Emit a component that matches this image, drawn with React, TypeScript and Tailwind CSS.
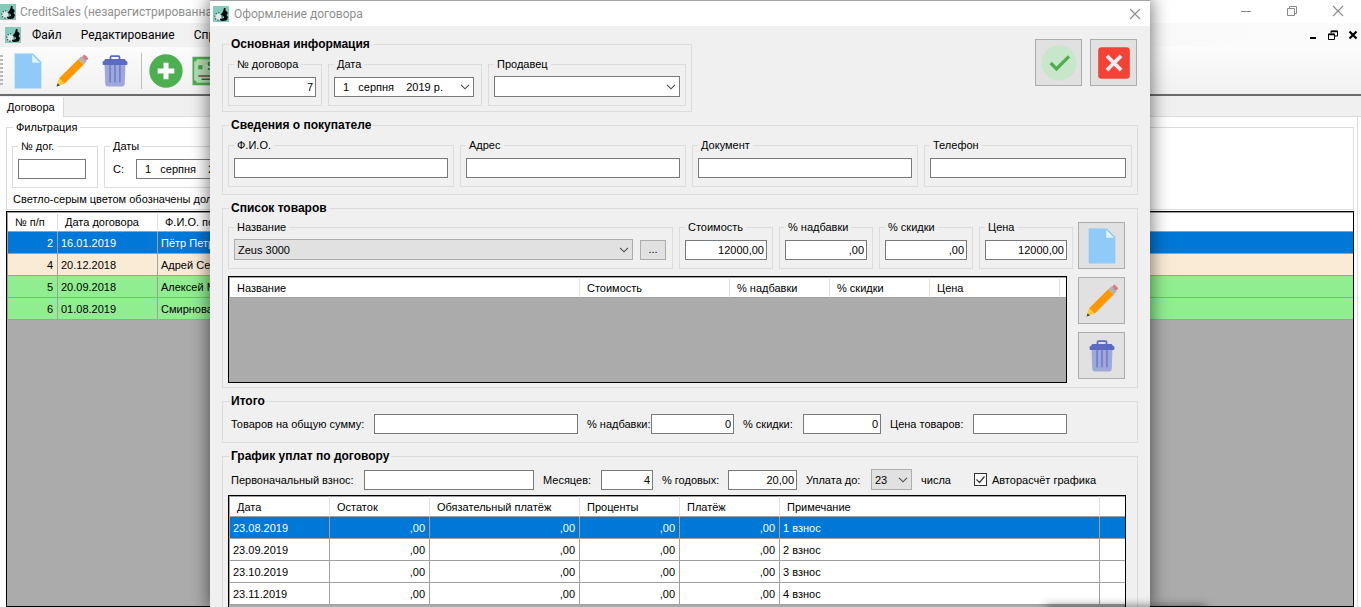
import React, { useId } from "react";

type IconProps = { className?: string };

function AppIcon() {
  return (
    <svg viewBox="0 0 16 16" className="size-4 shrink-0" aria-hidden="true">
      <rect width="16" height="16" fill="#86cabd" />
      <circle cx="5.500" cy="10.500" r="3.600" fill="#d9ebe6" stroke="#2c4440" strokeWidth="1.200" strokeDasharray="1.200 1.500" />
      <path d="M11 2h1.500v2.500L14.500 6v2l-1 1 1.500 2-1 3-2 1-1.500-1 .5-3-1-1.500-1.500.500V8l1.500-2.500z" fill="#050b0a" />
      <path d="M7.500 8.500l3-1v2zM7 13l4-1v3H8z" fill="#0b1716" />
    </svg>
  );
}

function FileIcon({ className }: IconProps) {
  return (
    <svg viewBox="0 0 48 48" className={className} aria-hidden="true">
      <path d="M40 45H8V3h22l10 10z" fill="#90caf9" />
      <path d="M38.500 14H29V4.500z" fill="#e1f5fe" />
    </svg>
  );
}

function PencilIcon({ className }: IconProps) {
  return (
    <svg viewBox="0 0 48 48" className={className} aria-hidden="true">
      <path d="M36.200 7.200l4.200 4.200L44.800 8.600c.8-.8.8-1.700 0-2.500l-3.100-3.100c-.8-.8-1.700-.8-2.500 0z" fill="#d97b83" />
      <path d="M32.400 8.200l4-4 7.200 7.200-4 4z" fill="#b3b3b3" />
      <path d="M6.800 33.800L32.400 8.200l7.200 7.200L14 41z" fill="#ff9800" />
      <path d="M6.800 33.800L3.500 44.500 14 41z" fill="#ffc930" />
      <path d="M4.800 40.200L3.400 44.600l4.500-1.400z" fill="#37474f" />
    </svg>
  );
}

function TrashIcon({ className }: IconProps) {
  return (
    <svg viewBox="0 0 48 48" className={className} aria-hidden="true">
      <path d="M18 9V5.500c0-.8.5-1.300 1.300-1.300h9.400c.8 0 1.300.5 1.300 1.300V9" fill="none" stroke="#5c6bc0" strokeWidth="2.400" />
      <path d="M10 14h28l-1 27c-.1 2-1.500 3.500-3.500 3.500h-19c-2 0-3.400-1.500-3.500-3.500z" fill="#9fa8da" />
      <path d="M17.500 17v21M24 17v21M30.500 17v21" stroke="#7381cc" strokeWidth="2.400" strokeLinecap="round" />
      <path d="M11 8h26l2 3h1.500v4c0 .6-.4 1-1 1h-31c-.6 0-1-.4-1-1v-4H9z" fill="#5c6bc0" />
    </svg>
  );
}

function PlusIcon({ className }: IconProps) {
  return (
    <svg viewBox="0 0 48 48" className={className} aria-hidden="true">
      <circle cx="24" cy="24" r="20" fill="#4caf50" />
      <path d="M21 14h6v20h-6zM14 21h20v6H14z" fill="#fff" />
    </svg>
  );
}

function MoneyIcon({ className }: IconProps) {
  return (
    <svg viewBox="0 0 48 48" className={className} aria-hidden="true">
      <path d="M3 7h42v34H3z" fill="#4caf50" />
      <path d="M8 10h32c0 2 1 3 3 3v22c-2 0-3 1-3 3H8c0-2-1-3-3-3V13c2 0 3-1 3-3z" fill="#b5deb7" />
      <path d="M10 17h5v5h-5z" fill="#43a047" />
      <circle cx="26" cy="19" r="7" fill="#c8e6c9" />
      <path d="M29 14.500c-1-1.500-7-1.500-7 1s7 2 7 4.500-6 3-7.500 1M25.500 11v14" fill="none" stroke="#2e7d32" strokeWidth="1.800" />
      <path d="M10 30h14M14 34h12" stroke="#6d4c41" strokeWidth="1.800" />
    </svg>
  );
}

function OkIcon({ className }: IconProps) {
  return (
    <svg viewBox="0 0 48 48" className={className} aria-hidden="true">
      <circle cx="24" cy="24" r="21" fill="#c8e6c9" />
      <path d="M34.600 14.600L21 28.200l-5.600-5.600-2.800 2.800 8.400 8.400 16.400-16.400z" fill="#4caf50" />
    </svg>
  );
}

function CancelIcon({ className }: IconProps) {
  return (
    <svg viewBox="0 0 48 48" className={className} aria-hidden="true">
      <rect x="5" y="5" width="38" height="38" rx="4" fill="#f44336" />
      <path d="M15.500 15.500l17 17M32.500 15.500l-17 17" stroke="#ffebee" strokeWidth="4.500" />
    </svg>
  );
}

function Chevron() {
  return (
    <svg viewBox="0 0 10 6" className="pointer-events-none col-start-1 row-start-1 mr-1 h-1.5 w-2.5 self-center justify-self-end" aria-hidden="true">
      <path d="M1 .8l4 4 4-4" fill="none" stroke="#4a4a4a" strokeWidth="1.100" />
    </svg>
  );
}

function CloseGlyph() {
  return (
    <svg viewBox="0 0 12 12" className="size-3" aria-hidden="true">
      <path d="M1 1l10 10M11 1L1 11" stroke="#8a8a8a" strokeWidth="1.100" />
    </svg>
  );
}

function Section({ title, className, children }: { title: string; className: string; children: React.ReactNode }) {
  return (
    <fieldset className={"min-w-0 border border-[#dcdcdc] px-[5px] " + className}>
      <legend className="ml-px px-0.5 text-[12px] leading-[13px] font-bold">{title}</legend>
      {children}
    </fieldset>
  );
}

function Box({ title, className = "", children }: { title: string; className?: string; children: React.ReactNode }) {
  return (
    <fieldset className={"min-w-0 border border-[#dcdcdc] px-[5px] pt-1.5 pb-2 " + className}>
      <legend className="px-[3px] leading-[13px] whitespace-nowrap">{title}</legend>
      {children}
    </fieldset>
  );
}

function TextBox({ value = "", label, id, className = "w-full" }: { value?: string; label?: string; id?: string; className?: string }) {
  return (
    <input
      id={id}
      type="text"
      aria-label={label}
      defaultValue={value}
      className={"block h-5 min-w-0 border border-[#7a7a7a] bg-white px-0.5 text-right outline-none " + className}
    />
  );
}

function Field({ label, value, className, width }: { label: string; value?: string; className: string; width: string }) {
  const id = useId();
  return (
    <div className={"flex items-center " + className}>
      <label htmlFor={id} className="whitespace-nowrap">{label}</label>
      <TextBox id={id} value={value} className={width} />
    </div>
  );
}

function DateBox({ label, className }: { label: string; className: string }) {
  return (
    <div className={"grid " + className}>
      <input
        type="text"
        aria-label={label}
        defaultValue={"1\u00a0\u00a0\u00a0серпня\u00a0\u00a0\u00a0\u00a02019 р."}
        className="col-start-1 row-start-1 block h-5 w-full min-w-0 border border-[#7a7a7a] bg-white pl-2 outline-none"
      />
      <Chevron />
    </div>
  );
}

function Combo({ options, label, id, className, look }: { options: string[]; label?: string; id?: string; className: string; look: string }) {
  return (
    <div className={"grid " + className}>
      <select
        id={id}
        aria-label={label}
        className={"col-start-1 row-start-1 block h-[21px] w-full min-w-0 appearance-none border pl-[3px] outline-none " + look}
      >
        {options.map((o) => (
          <option key={o}>{o}</option>
        ))}
      </select>
      <Chevron />
    </div>
  );
}

type Column = { title: string; width: string; right?: boolean };
type GridProps = { columns: Column[]; rows: string[][]; rowLooks: string[]; className: string; headHeight?: string };

function Grid({ columns, rows, rowLooks, className, headHeight = "h-[21px]" }: GridProps) {
  return (
    <div className={"border border-black bg-[#ababab] " + className}>
      <table className="w-full table-fixed border-separate border-spacing-0 border-l border-[#a0a0a0]">
        <thead>
          <tr className={"bg-white " + headHeight}>
            {columns.map((c, i) => (
              <th
                key={i}
                scope="col"
                className={"border-t border-r border-b border-t-[#a0a0a0] border-r-[#e2e2e2] border-b-[#a0a0a0] p-0 pl-[7px] text-left font-normal whitespace-nowrap last:border-r-0 empty:pl-0 " + c.width}
              >
                {c.title}
              </th>
            ))}
          </tr>
        </thead>
        <tbody>
          {rows.map((row, r) => (
            <tr key={r} className={"h-[22px] " + rowLooks[r]}>
              {columns.map((c, i) => (
                <td
                  key={i}
                  className={"border-r border-b border-[#a0a0a0] p-0 pr-1 pl-[3px] whitespace-nowrap last:border-r-0 " + (c.right ? "text-right" : "text-left")}
                >
                  {row[i]}
                </td>
              ))}
            </tr>
          ))}
        </tbody>
      </table>
    </div>
  );
}

const contractColumns: Column[] = [
  { title: "№ п/п", width: "w-[50px]", right: true },
  { title: "Дата договора", width: "w-[100px]" },
  { title: "Ф.И.О. пок.", width: "" },
];
const contracts = [
  ["2", "16.01.2019", "Пётр Петров"],
  ["4", "20.12.2018", "Адрей Сем."],
  ["5", "20.09.2018", "Алексей М."],
  ["6", "01.08.2019", "Смирнова"],
];
const contractLooks = ["bg-[#0078d7] text-white", "bg-[#faebd7]", "bg-[#90ee90]", "bg-[#90ee90]"];

const goodsColumns: Column[] = [
  { title: "Название", width: "" },
  { title: "Стоимость", width: "w-[150px]" },
  { title: "% надбавки", width: "w-[100px]" },
  { title: "% скидки", width: "w-[100px]" },
  { title: "Цена", width: "w-[130px]" },
  { title: "", width: "w-[6px]" },
];

const paymentColumns: Column[] = [
  { title: "Дата", width: "w-[100px]" },
  { title: "Остаток", width: "w-[100px]", right: true },
  { title: "Обязательный платёж", width: "w-[150px]", right: true },
  { title: "Проценты", width: "w-[100px]", right: true },
  { title: "Платёж", width: "w-[100px]", right: true },
  { title: "Примечание", width: "" },
  { title: "", width: "w-[25px]" },
];
const payments = [
  ["23.08.2019", ",00", ",00", ",00", ",00", "1 взнос", ""],
  ["23.09.2019", ",00", ",00", ",00", ",00", "2 взнос", ""],
  ["23.10.2019", ",00", ",00", ",00", ",00", "3 взнос", ""],
  ["23.11.2019", ",00", ",00", ",00", ",00", "4 взнос", ""],
];
const paymentLooks = ["bg-[#0078d7] text-white", "bg-white", "bg-white", "bg-white"];

const bigButton = "grid size-[47px] shrink-0 place-items-center border border-[#adadad] bg-[#e1e1e1]";

function MainWindow() {
  return (
    <div className="flex h-full flex-col bg-white">
      <header className="flex h-[23px] shrink-0 items-center justify-between bg-white pr-[17px] font-[Roboto,'Open_Sans',sans-serif] text-[12px] text-[#8f8f8f]">
        <div className="flex items-center gap-1 whitespace-nowrap">
          <AppIcon />
          <span>CreditSales (незарегистрированная</span>
        </div>
        <div className="flex items-center gap-[34px] pb-0.5">
          <button type="button" aria-label="Свернуть">
            <svg viewBox="0 0 12 12" className="size-3"><path d="M1 6.500h10" stroke="#8a8a8a" /></svg>
          </button>
          <button type="button" aria-label="Восстановить">
            <svg viewBox="0 0 12 12" className="size-3"><path d="M1.500 3.500h7v7h-7zM3.500 3.500v-2h7v7h-2" fill="none" stroke="#8a8a8a" /></svg>
          </button>
          <button type="button" aria-label="Закрыть"><CloseGlyph /></button>
        </div>
      </header>

      <nav className="flex h-6 shrink-0 items-center justify-between bg-linear-to-r from-[#f0f0f0] to-[#fbfbfb] pr-[3px] pl-[5px] font-[Roboto,'Open_Sans',sans-serif] text-[12px]">
        <div className="flex items-center">
          <AppIcon />
          <button type="button" className="ml-[11px]">Файл</button>
          <button type="button" className="ml-[19px]">Редактирование</button>
          <button type="button" className="ml-[19px]">Справка</button>
        </div>
        <div className="flex items-center gap-2.5">
          <button type="button" aria-label="Свернуть документ">
            <svg viewBox="0 0 10 10" className="size-2.5"><path d="M2 8h6" stroke="#000" strokeWidth="2" /></svg>
          </button>
          <button type="button" aria-label="Восстановить документ">
            <svg viewBox="0 0 10 10" className="size-2.5"><path d="M.5 4h6v5.500h-6zM3 3.500V1h6.500v5H7" fill="none" stroke="#000" /><path d="M.5 4.500h6M3 1.500h6.500" stroke="#000" strokeWidth="1.500" /></svg>
          </button>
          <button type="button" aria-label="Закрыть документ">
            <svg viewBox="0 0 10 10" className="size-2.5"><path d="M1.500 1.500l7 7M8.500 1.500l-7 7" stroke="#000" strokeWidth="2.200" /></svg>
          </button>
        </div>
      </nav>

      <div className="flex h-[49px] shrink-0 items-center border-b-2 border-[#6b6b6b] bg-linear-to-b from-[#fcfcfc] to-[#f1f1f1]">
        <span className="h-8 w-[3px] bg-[repeating-linear-gradient(to_bottom,#b8b8b8_0_2px,transparent_2px_4px)]" />
        <button type="button" aria-label="Новый" className="ml-[5px]"><FileIcon className="size-10" /></button>
        <button type="button" aria-label="Изменить" className="ml-1.5"><PencilIcon className="size-9" /></button>
        <button type="button" aria-label="Удалить" className="ml-[7px]"><TrashIcon className="size-9" /></button>
        <span className="ml-2 h-9 w-px bg-[#bdbdbd]" />
        <button type="button" aria-label="Добавить" className="ml-1"><PlusIcon className="size-10" /></button>
        <button type="button" aria-label="Оплата" className="ml-1"><MoneyIcon className="size-10" /></button>
      </div>

      <div className="flex h-[21px] shrink-0 items-end bg-[#f0f0f0]">
        <button type="button" className="h-5 border-r border-[#d9d9d9] bg-white pr-2 pl-[7px]">Договора</button>
        <span className="h-px flex-1 bg-[#dcdcdc]" />
      </div>

      <main className="mr-[3px] flex min-h-0 flex-1 flex-col border-r border-[#dcdcdc] pt-1 pr-[3px] pl-1.5">
        <fieldset className="border border-[#dcdcdc] px-[5px] pb-[3px]">
          <legend className="ml-px px-[3px] leading-[13px]">Фильтрация</legend>
          <div className="flex gap-1.5 pt-1.5">
            <Box title="№ дог." className="w-[86px]"><TextBox label="№ дог." className="w-[68px]" /></Box>
            <Box title="Даты" className="w-[290px]">
              <div className="flex items-center">
                <span className="w-[26px] pl-[3px]">С:</span>
                <DateBox label="С" className="w-[139px]" />
              </div>
            </Box>
          </div>
          <p className="pt-1 pl-px leading-[14px]">Светло-серым цветом обозначены долги</p>
        </fieldset>
        <Grid columns={contractColumns} rows={contracts} rowLooks={contractLooks} headHeight="h-5" className="mt-px flex-1" />
      </main>
    </div>
  );
}

function ContractDialog() {
  const dayId = useId();
  return (
    <section
      role="dialog"
      aria-label="Оформление договора"
      className="absolute top-0 right-[211px] bottom-0 left-[210px] border-t border-[#a5a5a5] bg-[#f0f0f0] shadow-[0_0_16px_2px_rgba(0,0,0,0.5)]"
    >
      <div className="flex h-full flex-col overflow-hidden">
        <header className="flex h-[25px] shrink-0 items-center justify-between bg-white pr-[9px] pl-[3px] font-[Roboto,'Open_Sans',sans-serif] text-[12px] text-[#8f8f8f]">
          <div className="flex items-center gap-[5px]">
            <AppIcon />
            <h1>Оформление договора</h1>
          </div>
          <button type="button" aria-label="Закрыть"><CloseGlyph /></button>
        </header>

        <div className="flex flex-col gap-[7px] px-3 pt-3">
          <div className="flex items-start justify-between">
            <Section title="Основная информация" className="pt-[7px] pb-[5px]">
              <div className="flex gap-1.5">
                <Box title="№ договора" className="w-[94px]"><TextBox label="№ договора" value="7" /></Box>
                <Box title="Дата" className="w-[154px]"><DateBox label="Дата" className="mr-0.5" /></Box>
                <Box title="Продавец" className="w-[198px]">
                  <Combo options={[""]} label="Продавец" className="-my-px" look="border-[#7a7a7a] bg-white" />
                </Box>
              </div>
            </Section>
            <div className="flex gap-2 pt-px pr-px">
              <button type="button" aria-label="Принять" className={bigButton}><OkIcon className="size-10" /></button>
              <button type="button" aria-label="Отменить" className={bigButton}><CancelIcon className="size-10" /></button>
            </div>
          </div>

          <Section title="Сведения о покупателе" className="pt-[7px] pb-[7px]">
            <div className="flex gap-1.5">
              <Box title="Ф.И.О." className="flex-1"><TextBox label="Ф.И.О." /></Box>
              <Box title="Адрес" className="flex-1"><TextBox label="Адрес" /></Box>
              <Box title="Документ" className="flex-1"><TextBox label="Документ" /></Box>
              <Box title="Телефон" className="w-[208px]"><TextBox label="Телефон" /></Box>
            </div>
          </Section>

          <Section title="Список товаров" className="pt-1.5 pb-1">
            <div className="flex gap-[5px] pr-[7px]">
              <div className="flex min-w-0 flex-1 flex-col gap-[7px]">
                <div className="flex gap-1.5">
                  <Box title="Название" className="flex-1">
                    <div className="-my-px flex items-center gap-[7px] pr-px">
                      <Combo options={["Zeus 3000"]} label="Название" className="flex-1" look="border-[#adadad] bg-[#e1e1e1]" />
                      <button type="button" className="h-5 w-[26px] border border-[#adadad] bg-[#e1e1e1] leading-none">...</button>
                    </div>
                  </Box>
                  <Box title="Стоимость" className="w-[94px]"><TextBox label="Стоимость" value="12000,00" /></Box>
                  <Box title="% надбавки" className="w-[94px]"><TextBox label="% надбавки" value=",00" /></Box>
                  <Box title="% скидки" className="w-[94px]"><TextBox label="% скидки" value=",00" /></Box>
                  <Box title="Цена" className="w-[94px]"><TextBox label="Цена" value="12000,00" /></Box>
                </div>
                <Grid columns={goodsColumns} rows={[]} rowLooks={[]} className="mr-1.5 h-[107px]" />
              </div>
              <div className="flex flex-col gap-2 pt-px">
                <button type="button" aria-label="Новый товар" className={bigButton}><FileIcon className="size-10" /></button>
                <button type="button" aria-label="Изменить товар" className={bigButton}><PencilIcon className="size-9" /></button>
                <button type="button" aria-label="Удалить товар" className={bigButton}><TrashIcon className="size-9" /></button>
              </div>
            </div>
          </Section>

          <Section title="Итого" className="pt-1.5 pb-2">
            <div className="flex items-center gap-[9px] pl-[3px]">
              <Field label="Товаров на общую сумму:" className="w-[347px] justify-between" width="w-[204px]" />
              <Field label="% надбавки:" value="0" className="w-[147px] justify-between" width="w-[83px]" />
              <Field label="% скидки:" value="0" className="w-[138px] justify-between" width="w-[78px]" />
              <Field label="Цена товаров:" className="w-[177px] justify-between" width="w-[94px]" />
            </div>
          </Section>

          <Section title="График уплат по договору" className="pt-1.5 pb-10">
            <div className="flex items-center gap-[9px] pl-[3px]">
              <Field label="Первоначальный взнос:" className="w-[303px] justify-between" width="w-[170px]" />
              <Field label="Месяцев:" value="4" className="w-[110px] justify-between" width="w-[52px]" />
              <Field label="% годовых:" value="20,00" className="w-[135px] justify-between" width="w-[69px]" />
              <div className="flex w-[106px] items-center justify-between">
                <label htmlFor={dayId} className="whitespace-nowrap">Уплата до:</label>
                <Combo id={dayId} options={["23"]} className="w-[41px]" look="border-[#adadad] bg-[#e1e1e1]" />
              </div>
              <span>числа</span>
              <label className="ml-3.5 flex items-center gap-[5px] whitespace-nowrap">
                <span className="grid">
                  <input type="checkbox" defaultChecked className="peer col-start-1 row-start-1 size-[13px] appearance-none border border-[#333] bg-white" />
                  <svg viewBox="0 0 13 13" className="pointer-events-none col-start-1 row-start-1 hidden size-[13px] peer-checked:block" aria-hidden="true">
                    <path d="M2.500 6.500l3 3 5-6" fill="none" stroke="#333" strokeWidth="1.200" />
                  </svg>
                </span>
                Авторасчёт графика
              </label>
            </div>
            <Grid columns={paymentColumns} rows={payments} rowLooks={paymentLooks} className="mt-[5px] mr-1.5 h-40" />
          </Section>
        </div>
      </div>
    </section>
  );
}

export default function App() {
  return (
    <div className="relative h-screen w-full overflow-hidden font-['Liberation_Sans',Arial,sans-serif] text-[11px] leading-[14px] text-black">
      <MainWindow />
      <ContractDialog />
      <div className="absolute right-[160px] -bottom-3 h-2 w-[150px] shadow-[0_0_10px_5px_rgba(0,0,0,0.5)]" />
    </div>
  );
}
